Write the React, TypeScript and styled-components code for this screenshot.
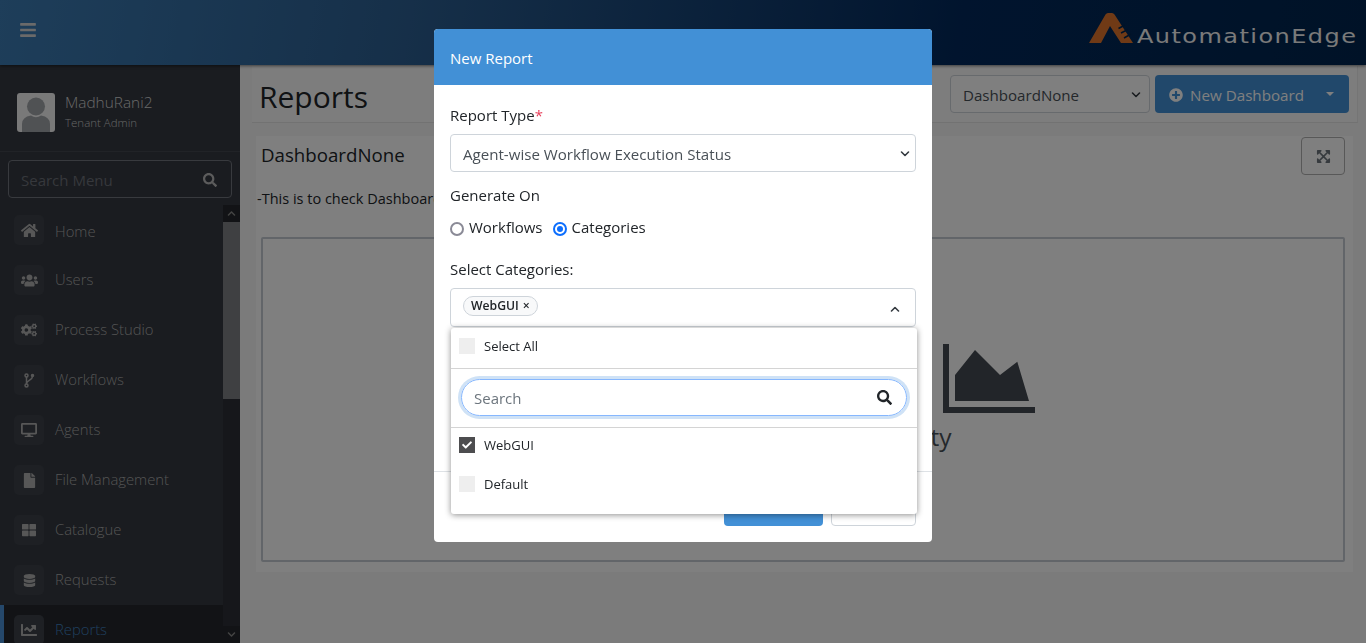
import React from "react";
import styled, { createGlobalStyle } from "styled-components";
import {
  FaBars, FaHome, FaUsers, FaCogs, FaDesktop, FaFile, FaThLarge,
  FaDatabase, FaChartLine, FaSearch, FaPlusCircle, FaExpandArrowsAlt,
  FaCheck, FaChevronUp, FaChevronDown,
} from "react-icons/fa";

const FONT = `"Open Sans", "Noto Sans", "Liberation Sans", sans-serif`;

const Global = createGlobalStyle`
  html, body { margin: 0; padding: 0; height: 100%; overflow: hidden; }
  body { font-family: ${FONT}; color: #212529; background: #f6f6f6; }
  * { box-sizing: border-box; }
`;

const Page = styled.div`
  width: 1366px; height: 643px; display: flex; flex-direction: column; overflow: hidden;
`;
const Header = styled.header`
  height: 65px; flex: none; display: flex; align-items: center; justify-content: space-between;
  padding: 0 10px 6px 19px; color: #e0e0e0;
  background: linear-gradient(100deg, #3c7cb4 0%, #2c5f92 30%, #02295c 70%, #00254f 100%);
  box-shadow: 0 1px 3px rgba(0,0,0,.5); position: relative; z-index: 2;
`;
const Burger = styled.span` font-size: 18px; display: flex; color: #d4d4d4; `;
const Logo = styled.div` display: flex; align-items: flex-end; gap: 4px; margin-top: -3px; `;
const LogoText = styled.span`
  display: inline-block; width: 219px; white-space: nowrap; transform: scaleX(1.2); transform-origin: left center;
  font-family: "DejaVu Sans", "Liberation Sans", sans-serif; font-size: 20px; line-height: 22px;
  font-weight: 400; color: #f4f4f4; letter-spacing: 1.2px; margin-bottom: -4px;
`;
const Body = styled.div` flex: 1; display: flex; min-height: 0; `;
const Sidebar = styled.aside`
  width: 240px; flex: none; background: #343840; display: flex; flex-direction: column;
`;
const UserBox = styled.div`
  height: 87px; flex: none; display: flex; align-items: center; gap: 10px; padding: 8px 17px 0;
  border-bottom: 1px solid #42464e;
`;
const Avatar = styled.div`
  width: 38px; height: 39px; border-radius: 3px; background: #f2f2f2; overflow: hidden; display: flex; flex: none;
`;
const UserInfo = styled.div` margin-top: -2px; `;
const UserName = styled.div` font-size: 15.4px; line-height: 20px; color: #d0d0d0; font-weight: 300; margin-top: 1px; `;
const UserRole = styled.div` font-size: 11.5px; line-height: 17px; color: #c8c8c8; margin-top: 1px; font-weight: 300; `;
const MenuSearch = styled.div`
  height: 38px; margin: 8px 8px 7px; border: 1px solid #70747c; border-radius: 4px; flex: none;
  display: flex; align-items: center; justify-content: space-between; padding: 1px 14px 0 12px;
  color: #b8b8b8; font-size: 15px;
`;
const MenuSearchText = styled.span` color: #6c7078; `;
const MenuArea = styled.div` flex: 1; min-height: 0; display: flex; `;
const Menu = styled.nav` flex: 1; overflow: hidden; `;
const Item = styled.div<{ $active?: boolean }>`
  height: 50px; display: flex; align-items: center; gap: 11px; padding: 0 0 0 ${p => (p.$active ? 10 : 14)}px;
  font-size: 14.8px; font-weight: 300; color: ${p => (p.$active ? "#3f7fbd" : "#a8a8a8")};
  background: ${p => (p.$active ? "#24272c" : "transparent")};
  border-left: ${p => (p.$active ? "4px solid #4a90d6" : "0")};
`;
const ItemLabel = styled.span<{ $first?: boolean }>` margin-top: ${p => (p.$first ? 2 : -2)}px; `;
const MenuIcon = styled.span`
  width: 30px; height: 30px; border-radius: 5px; background: #3c4048; flex: none;
  display: flex; align-items: center; justify-content: center; font-size: 15px; color: #aeaeae;
`;
const Track = styled.div`
  width: 17px; flex: none; background: #2c2f36; display: flex; flex-direction: column; align-items: center;
`;
const TrackBtn = styled.div`
  height: 17px; width: 100%; flex: none; display: flex; align-items: center; justify-content: center;
  font-size: 9px; color: #888; background: #24272c;
`;
const Thumb = styled.div` width: 100%; height: 177px; flex: none; background: #7e8084; `;
const TrackFill = styled.div` flex: 1; `;
const Main = styled.main` flex: 1; min-width: 0; padding: 1px 8px 0 12px; `;
const TitleBar = styled.div`
  height: 57px; display: flex; align-items: center; justify-content: space-between; padding: 0 8px 0 7px;
  background: #fbfbfb; border-bottom: 1px solid #e4e4e4; border-right: 1px solid #eaeaea;
`;
const Title = styled.h1` margin: 6px 0 0; font-size: 30px; font-weight: 400; line-height: 1; color: #212529; `;
const TitleActions = styled.div` display: flex; gap: 5px; align-items: center; `;
const DashSelect = styled.div`
  width: 200px; height: 38px; border: 1px solid #ced4da; border-radius: 4px; display: flex;
  align-items: center; justify-content: space-between; padding: 2px 5px 0 12px; font-size: 15.1px;
  color: #495057; background: #fff;
`;
const NewBtn = styled.div`
  width: 194px; height: 38px; border-radius: 4px; background: #4290d6; color: #fff; display: flex;
  align-items: center; padding: 2px 15px 0 14px; font-size: 15.2px; gap: 7px;
`;
const Caret = styled.span`
  margin-left: auto; width: 0; height: 0; border: 4px solid transparent; border-top-color: #fff;
  border-bottom-width: 0; margin-top: -3px;
`;
const Card = styled.section`
  margin: 13px 5px 0 4px; height: 436px; background: #fff; padding: 1px 8px 0 4px;
`;
const CardHead = styled.div`
  display: flex; justify-content: space-between; align-items: flex-start; height: 43px; padding-left: 1px;
`;
const CardTitle = styled.div` font-size: 18.7px; line-height: 36px; color: #212529; `;
const ExpandBtn = styled.div`
  width: 44px; height: 38px; border: 1px solid #b0b0b0; border-radius: 4px; display: flex;
  align-items: center; justify-content: center; font-size: 15px; color: #6c757d;
`;
const Desc = styled.p` margin: 0 0 0 -3px; font-size: 14.5px; line-height: 22px; padding-top: 8px; height: 56px; `;
const ChartBox = styled.div`
  height: 325px; margin: 1px 0 0 1px; border: 2px solid #c4cbd2; border-radius: 2px;
  display: flex; flex-direction: column; align-items: center; padding-top: 105px;
`;
const AreaIcon = styled.svg` margin-left: 372px; flex: none; `;
const ChartText = styled.div` font-size: 24.5px; line-height: 32px; color: #495057; margin-top: 8px; `;

const Overlay = styled.div`
  position: fixed; inset: 0; background: rgba(0,0,0,.5); z-index: 10;
`;
const Modal = styled.div`
  position: absolute; left: 434px; top: 29px; width: 498px; height: 513px; background: #fff;
  border-radius: 4px; display: flex; flex-direction: column; z-index: 11;
`;
const ModalHead = styled.div`
  height: 56px; flex: none; background: #4290d6; color: #fff; font-size: 15px; display: flex;
  align-items: center; padding: 1px 16px 0; border-radius: 4px 4px 0 0;
`;
const ModalBody = styled.div`
  flex: 1; padding: 20px 16px 0; position: relative; display: flex; flex-direction: column;
`;
const Label = styled.div` font-size: 15px; line-height: 20px; color: #212529; `;
const Req = styled.span` color: #e83e5a; `;
const FieldSelect = styled.div`
  height: 38px; margin-top: 9px; border: 1px solid #ced4da; border-radius: 4px; display: flex;
  align-items: center; justify-content: space-between; padding: 2px 2px 0 12px; font-size: 15.1px; color: #495057;
`;
const GenLabel = styled(Label)` margin-top: 13px; `;
const Radios = styled.div` display: flex; gap: 10px; margin-top: 12px; height: 20px; `;
const RadioItem = styled.label` display: flex; align-items: center; gap: 5px; font-size: 15px; color: #212529; line-height: 20px; `;
const RadioDot = styled.span<{ $on?: boolean }>`
  width: 14px; height: 14px; border-radius: 50%; margin-top: 4px; background: #fff; flex: none;
  border: ${p => (p.$on ? "2px solid #0d6efd" : "2px solid #8a8a96")};
  display: flex; align-items: center; justify-content: center;
  &::after { content: ""; width: 6px; height: 6px; border-radius: 50%; background: ${p => (p.$on ? "#0d6efd" : "transparent")}; }
`;
const CatLabel = styled(Label)` margin-top: 22px; `;
const MultiBox = styled.div`
  height: 39px; margin-top: 9px; border: 1px solid #ced4da; border-radius: 4px; display: flex;
  align-items: flex-start; justify-content: space-between; padding: 7px 12px 0 12px;
`;
const Chip = styled.span`
  height: 20px; border: 1px solid #ced4da; border-radius: 10px; padding: 0 7px; font-size: 12.2px;
  line-height: 18px; font-weight: 600; color: #212529; background: #f8f9fa; display: inline-flex; gap: 4px;
`;
const ChevUp = styled.span` margin-top: 5px; display: flex; transform: rotate(180deg); `;
const Dropdown = styled.div`
  position: absolute; left: 17px; top: 243px; width: 466px; height: 186px; background: #fff; z-index: 3;
  border-radius: 3px; box-shadow: 0 1px 6px rgba(0,0,0,.45);
`;
const DropRow = styled.div`
  height: 39px; display: flex; align-items: center; gap: 9px; padding: 0 0 6px 8px; font-size: 13px; color: #212529;
`;
const DropTop = styled(DropRow)` height: 41px; border-bottom: 1px solid #d4d4d4; padding-bottom: 4px; `;
const Check = styled.span<{ $on?: boolean }>`
  width: 16px; height: 16px; flex: none; background: ${p => (p.$on ? "#4d4d4f" : "#eeeeee")};
  display: flex; align-items: center; justify-content: center; color: #fff; font-size: 10px;
`;
const SearchWrap = styled.div`
  height: 59px; border-bottom: 1px solid #d4d4d4; padding: 10px 10px 0;
`;
const SearchField = styled.div`
  height: 37px; border: 1px solid #86b7fe; border-radius: 19px; box-shadow: 0 0 0 3px #cfe2f6;
  display: flex; align-items: center; justify-content: space-between; padding: 0 14px 0 12px;
  font-size: 15px; color: #6c757d;
`;
const SearchIcon = styled.span` color: #212529; font-size: 15px; display: flex; `;
const Footer = styled.div`
  height: 71px; flex: none; border-top: 1px solid #dee2e6; display: flex; justify-content: flex-end;
  align-items: flex-end; gap: 8px; padding: 0 16px 16px;
`;
const SaveBtn = styled.div` width: 99px; height: 38px; background: #4290d6; border-radius: 4px; `;
const CancelBtn = styled.div` width: 85px; height: 38px; border: 1px solid #ced4da; border-radius: 4px; `;

const Chevron = () => (
  <svg width="16" height="16" viewBox="0 0 16 16" fill="none" stroke="#343a40" strokeWidth="1.6" strokeLinecap="round" strokeLinejoin="round">
    <path d="M4.5 6 8 9.5 11.5 6" />
  </svg>
);

const Fork = () => (
  <svg width="11" height="15" viewBox="0 0 11 15" fill="none" stroke="currentColor" strokeWidth="1.5">
    <circle cx="2.5" cy="2.5" r="1.5" />
    <circle cx="2.5" cy="12.5" r="1.5" />
    <circle cx="8.5" cy="2.5" r="1" fill="currentColor" />
    <path d="M2.5 4v7M8.5 3.5C8.5 7 3 7 2.5 10.5" />
  </svg>
);

const Person = () => (
  <svg width="38" height="39" viewBox="0 0 38 39">
    <circle cx="19" cy="13.5" r="9" fill="#a0a4a8" />
    <path d="M5 39V31Q5 24 14 22.5Q19 26 24 22.5Q33 24 33 31V39Z" fill="#a0a4a8" />
  </svg>
);

const menu: [string, React.ReactNode][] = [
  ["Home", <FaHome size={17} />],
  ["Users", <FaUsers size={17} />],
  ["Process Studio", <FaCogs size={16} />],
  ["Workflows", <Fork />],
  ["Agents", <FaDesktop size={16} />],
  ["File Management", <FaFile size={15} />],
  ["Catalogue", <FaThLarge size={14} />],
  ["Requests", <FaDatabase size={13} />],
  ["Reports", <FaChartLine size={16} />],
];

export default function App() {
  return (
    <Page>
      <Global />
      <Header>
        <Burger><FaBars /></Burger>
        <Logo>
          <svg width="44" height="30" viewBox="0 0 44 30">
            <path d="M0 30 L16.5 1.5 Q17.5 0 19 0 L23 0 Q24.5 0 25.5 1.5 L44 30 L32 30 L21 13 L12 30 Z" fill="#e0752c" />
            <path d="M29.5 15.5 L36 12 M32 20 L39 16.5 M35 25 L42 21" stroke="#00254f" strokeWidth="1.6" />
          </svg>
          <LogoText>AutomationEdge</LogoText>
        </Logo>
      </Header>
      <Body>
        <Sidebar>
          <UserBox>
            <Avatar><Person /></Avatar>
            <UserInfo>
              <UserName>MadhuRani2</UserName>
              <UserRole>Tenant Admin</UserRole>
            </UserInfo>
          </UserBox>
          <MenuSearch>
            <MenuSearchText>Search Menu</MenuSearchText>
            <FaSearch size={14} />
          </MenuSearch>
          <MenuArea>
            <Menu>
              {menu.map(([name, icon], i) => (
                <Item key={name} $active={name === "Reports"}>
                  <MenuIcon>{icon}</MenuIcon>
                  <ItemLabel $first={i === 0}>{name}</ItemLabel>
                </Item>
              ))}
            </Menu>
            <Track>
              <TrackBtn><FaChevronUp /></TrackBtn>
              <Thumb />
              <TrackFill />
              <TrackBtn><FaChevronDown /></TrackBtn>
            </Track>
          </MenuArea>
        </Sidebar>
        <Main>
          <TitleBar>
            <Title>Reports</Title>
            <TitleActions>
              <DashSelect>DashboardNone<Chevron /></DashSelect>
              <NewBtn><FaPlusCircle size={14} />New Dashboard<Caret /></NewBtn>
            </TitleActions>
          </TitleBar>
          <Card>
            <CardHead>
              <CardTitle>DashboardNone</CardTitle>
              <ExpandBtn><FaExpandArrowsAlt /></ExpandBtn>
            </CardHead>
            <Desc>-This is to check Dashboard with no report</Desc>
            <ChartBox>
              <AreaIcon width="92" height="69" viewBox="0 0 92 69" fill="#454b52">
                <path d="M0 0H6V63H92V69H0Z" />
                <path d="M12 31 32 6 57 31 74.3 17.7 86 57H12Z" />
              </AreaIcon>
              <ChartText>No reports for this activity</ChartText>
            </ChartBox>
          </Card>
        </Main>
      </Body>
      <Overlay />
      <Modal>
        <ModalHead>New Report</ModalHead>
        <ModalBody>
          <Label>Report Type<Req>*</Req></Label>
          <FieldSelect>Agent-wise Workflow Execution Status<Chevron /></FieldSelect>
          <GenLabel>Generate On</GenLabel>
          <Radios>
            <RadioItem><RadioDot />Workflows</RadioItem>
            <RadioItem><RadioDot $on />Categories</RadioItem>
          </Radios>
          <CatLabel>Select Categories:</CatLabel>
          <MultiBox>
            <Chip>WebGUI <span>×</span></Chip>
            <ChevUp><Chevron /></ChevUp>
          </MultiBox>
          <Dropdown>
            <DropTop><Check />Select All</DropTop>
            <SearchWrap>
              <SearchField>Search<SearchIcon><FaSearch /></SearchIcon></SearchField>
            </SearchWrap>
            <DropRow><Check $on><FaCheck /></Check>WebGUI</DropRow>
            <DropRow><Check />Default</DropRow>
          </Dropdown>
        </ModalBody>
        <Footer>
          <SaveBtn />
          <CancelBtn />
        </Footer>
      </Modal>
    </Page>
  );
}
